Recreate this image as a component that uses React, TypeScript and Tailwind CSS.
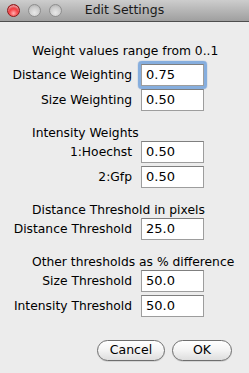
import React from "react";

const font = { fontFamily: '"DejaVu Sans", "Lucida Grande", Verdana, sans-serif' };

function Field({ label, value, focused, className = "" }: { label: string; value: string; focused?: boolean; className?: string }) {
  return (
    <div className={`flex items-center ${className}`}>
      <div className="w-[132px] text-right text-[12.3px] leading-[16px] text-black whitespace-nowrap">{label}</div>
      <div className="ml-[9px] relative w-[63px] h-[22px]">
        {focused && (
          <div className="absolute -inset-[3px] rounded-[4px] border-[3px] border-[#86aede] shadow-[0_0_1px_#4b7fc0]" />
        )}
        <div className="absolute inset-0 bg-white border border-[#9d9d9d] border-t-[#7f7f7f] flex items-center pl-[4px] text-[13px] text-black">
          {value}
        </div>
      </div>
    </div>
  );
}

function Heading({ children, className = "" }: { children: React.ReactNode; className?: string }) {
  return <div className={`pl-[32px] text-[12.3px] leading-[16px] text-black whitespace-nowrap ${className}`}>{children}</div>;
}

export default function App() {
  return (
    <div className="w-[249px] h-[373px] bg-[#ececec] flex flex-col overflow-hidden" style={font}>
      <div className="relative h-[22px] bg-gradient-to-b from-[#cdcdcd] to-[#9f9f9f] border-b border-[#4e4e4e] flex items-center justify-center shrink-0">
        <div className="absolute left-[7px] top-[4px] flex gap-[8px]">
          <div className="w-[13px] h-[13px] rounded-full border border-[#8c1a1a] bg-[radial-gradient(circle_at_50%_75%,#ffb0b0_0%,#f5383c_45%,#b30f18_100%)] shadow-[inset_0_2px_2px_rgba(255,255,255,0.55)]" />
          <div className="w-[13px] h-[13px] rounded-full border border-[#8e8e8e] bg-[radial-gradient(circle_at_50%_70%,#e8e8e8_0%,#cdcdcd_55%,#a9a9a9_100%)]" />
          <div className="w-[13px] h-[13px] rounded-full border border-[#8e8e8e] bg-[radial-gradient(circle_at_50%_70%,#e8e8e8_0%,#cdcdcd_55%,#a9a9a9_100%)]" />
        </div>
        <span className="text-[12.5px] text-[#1a1a1a] leading-none">Edit Settings</span>
      </div>

      <Heading className="mt-[21px]">Weight values range from 0..1</Heading>
      <Field className="mt-[5px]" label="Distance Weighting" value="0.75" focused />
      <Field className="mt-[3px]" label="Size Weighting" value="0.50" />

      <Heading className="mt-[14px]">Intensity Weights</Heading>
      <Field label="1:Hoechst" value="0.50" />
      <Field className="mt-[3px]" label="2:Gfp" value="0.50" />

      <Heading className="mt-[14px]">Distance Threshold in pixels</Heading>
      <Field label="Distance Threshold" value="25.0" />

      <Heading className="mt-[14px]">Other thresholds as % difference</Heading>
      <Field label="Size Threshold" value="50.0" />
      <Field className="mt-[3px]" label="Intensity Threshold" value="50.0" />

      <div className="mt-[23px] flex justify-end pr-[17px] gap-[7px]">
        <button className="w-[68px] h-[21px] rounded-full border border-[#6e6e6e] bg-gradient-to-b from-[#ffffff] via-[#f3f3f3] to-[#dedede] text-[12.5px] text-black leading-none shadow-[0_1px_0_rgba(0,0,0,0.1)]">
          Cancel
        </button>
        <button className="w-[60px] h-[21px] rounded-full border border-[#6e6e6e] bg-gradient-to-b from-[#ffffff] via-[#f3f3f3] to-[#dedede] text-[12.5px] text-black leading-none shadow-[0_1px_0_rgba(0,0,0,0.1)]">
          OK
        </button>
      </div>
    </div>
  );
}
